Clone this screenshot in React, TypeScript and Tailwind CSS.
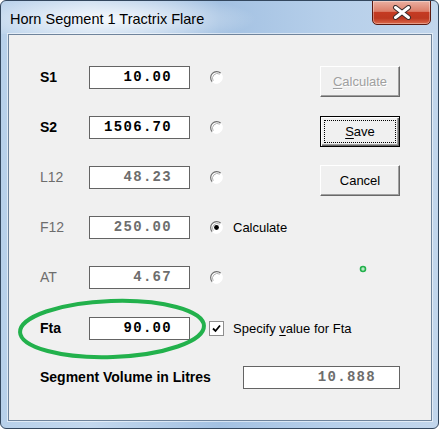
import React from 'react';

const mono = "font-['Liberation_Mono',monospace] font-bold text-[14px] tracking-[1.3px]";
const sans = "font-['Liberation_Sans',Arial,sans-serif]";

function Radio({ checked = false }: { checked?: boolean }) {
  return (
    <svg width="13" height="13" viewBox="0 0 13 13" className="flex-none">
      <circle cx="6.5" cy="6.5" r="6" fill="#ffffff" />
      <path d="M2.26 10.74 A6 6 0 0 1 10.74 2.26" stroke="#6e6e6e" strokeWidth="1.2" fill="none" />
      <path d="M3.2 9.8 A4.8 4.8 0 0 1 9.8 3.2" stroke="#a8a8a8" strokeWidth="0.9" fill="none" />
      <path d="M2.26 10.74 A6 6 0 0 0 10.74 2.26" stroke="#ffffff" strokeWidth="1" fill="none" />
      {checked && <circle cx="6.5" cy="6.5" r="2.4" fill="#000000" />}
    </svg>
  );
}

function Check() {
  return (
    <div className="w-[15px] h-[15px] flex-none border border-[#8e8e8e] bg-white">
      <svg width="13" height="13" viewBox="0 0 13 13">
        <path d="M3 6.5 L5.5 9 L10 3.5" stroke="#000" strokeWidth="1.8" fill="none" />
      </svg>
    </div>
  );
}

function ValueBox({ value, gray = false, width = 'w-[101px]', pad = 'pr-[17px]' }: { value: string; gray?: boolean; width?: string; pad?: string }) {
  return (
    <div
      className={`${width} h-[23px] flex-none border border-[#646464] bg-white flex items-center justify-end ${pad} ${mono} ${
        gray ? 'text-[#6d6d6d]' : 'text-black'
      }`}
    >
      {value}
    </div>
  );
}

const rows = [
  { label: 'S1', value: '10.00', bold: true, checked: false, mt: 'mt-0' },
  { label: 'S2', value: '1506.70', bold: true, checked: false, mt: 'mt-[27px]' },
  { label: 'L12', value: '48.23', bold: false, checked: false, mt: 'mt-[27px]' },
  { label: 'F12', value: '250.00', bold: false, checked: true, mt: 'mt-[27px]' },
  { label: 'AT', value: '4.67', bold: false, checked: false, mt: 'mt-[27px]' },
];

export default function App() {
  return (
    <div className="w-[439px] h-[429px] bg-white">
      <div className="w-[439px] h-[429px] flex flex-col rounded-[6px] border border-[#33475e] overflow-hidden bg-[linear-gradient(90deg,#b7d0ea_0%,#c3d8ee_20%,#a3c1e2_50%,#b6cfea_75%,#c2d6ec_100%)]">
        {/* Title bar */}
        <div className="h-[33px] flex flex-none bg-[radial-gradient(ellipse_150px_26px_at_105px_18px,rgba(255,255,255,0.85),rgba(255,255,255,0))]">
          <div className={`pl-[9px] pt-[9px] ${sans} text-[14.5px] text-black leading-[18px]`}>
            Horn Segment 1 Tractrix Flare
          </div>
          <div className="ml-auto mr-[7px] -mt-px w-[59px] h-[25px] rounded-b-[5px] border border-[#5c1a10] bg-[linear-gradient(180deg,#eab0a2_0%,#dc7e69_45%,#c43a22_50%,#bd3820_75%,#dc6a4c_100%)] flex items-center justify-center shadow-[inset_0_0_0_1px_rgba(255,255,255,0.35)]">
            <svg width="20" height="15" viewBox="0 0 20 15">
              <path d="M3.5 2.5 L16.5 12.5 M16.5 2.5 L3.5 12.5" stroke="#3a2d2d" strokeWidth="5" strokeLinecap="round" />
              <path d="M3.5 2.5 L16.5 12.5 M16.5 2.5 L3.5 12.5" stroke="#ffffff" strokeWidth="3" strokeLinecap="round" />
            </svg>
          </div>
        </div>

        {/* Client area */}
        <div className="relative flex-1 ml-[7px] mr-[6px] mb-[7px] border border-[#6f849c] bg-[#f0f0f0] shadow-[0_0_0_1px_rgba(255,255,255,0.55)]">
          <div className="flex pl-[31px] pt-[31px]">
            <div className="w-[280px] flex flex-col">
              {rows.map((r) => (
                <div key={r.label} className={`h-[23px] flex items-center ${r.mt}`}>
                  <div
                    className={`w-[49px] flex-none ${sans} text-[14px] ${
                      r.bold ? 'font-bold text-black' : 'text-[#6d6d6d]'
                    }`}
                  >
                    {r.label}
                  </div>
                  <ValueBox value={r.value} gray={!r.bold} />
                  <div className="ml-[20px]">
                    <Radio checked={r.checked} />
                  </div>
                  {r.checked && <span className={`ml-[10px] ${sans} text-[13px] text-black`}>Calculate</span>}
                </div>
              ))}

              <div className="h-[23px] flex items-center mt-[28px]">
                <div className={`w-[49px] flex-none ${sans} text-[14px] font-bold text-black`}>Fta</div>
                <ValueBox value="90.00" />
                <div className="ml-[19px]">
                  <Check />
                </div>
                <span className={`ml-[9px] ${sans} text-[13px] text-black whitespace-nowrap`}>
                  Specify <span className="underline underline-offset-2">v</span>alue for Fta
                </span>
              </div>
            </div>

            <div className="flex flex-col">
              <button className={`w-[80px] h-[31px] bg-[#f0f0f0] border border-t-white border-l-white border-r-[#696969] border-b-[#696969] shadow-[inset_-1px_-1px_0_#a0a0a0] ${sans} text-[13px] text-[#a0a0a0] [text-shadow:1px_1px_0_#ffffff]`}>
                <span className="underline underline-offset-2">C</span>alculate
              </button>
              <button className={`mt-[19px] w-[80px] h-[31px] p-[3px] bg-[#f0f0f0] border border-black shadow-[inset_1px_1px_0_#ffffff,inset_-1px_-1px_0_#696969,inset_-2px_-2px_0_#a0a0a0] ${sans} text-[13px] text-black`}>
                <div className="w-full h-full border border-dotted border-black flex items-center justify-center">
                  <span>
                    <span className="underline underline-offset-2">S</span>ave
                  </span>
                </div>
              </button>
              <button className={`mt-[18px] w-[80px] h-[31px] bg-[#f0f0f0] border border-t-white border-l-white border-r-[#696969] border-b-[#696969] shadow-[inset_-1px_-1px_0_#a0a0a0] ${sans} text-[13px] text-black`}>
                Cancel
              </button>
            </div>
          </div>

          <div className="flex items-center h-[23px] mt-[26px] pl-[31px]">
            <div className={`w-[203px] flex-none ${sans} text-[14px] font-bold text-black`}>Segment Volume in Litres</div>
            <ValueBox value="10.888" gray width="w-[157px]" pad="pr-[23px]" />
          </div>

          {/* annotation ellipse */}
          <svg className="absolute left-[7px] top-[262px]" width="192" height="64" viewBox="0 0 192 64">
            <ellipse cx="96" cy="32" rx="92" ry="28" transform="rotate(-2 96 32)" stroke="#22b14c" strokeWidth="4" fill="none" />
          </svg>
          {/* small green marker */}
          <svg className="absolute left-[350px] top-[230px]" width="8" height="8" viewBox="0 0 8 8">
            <circle cx="4" cy="4" r="2.5" stroke="#22b14c" strokeWidth="1.6" fill="#b8e6c4" />
          </svg>
        </div>
      </div>
    </div>
  );
}
